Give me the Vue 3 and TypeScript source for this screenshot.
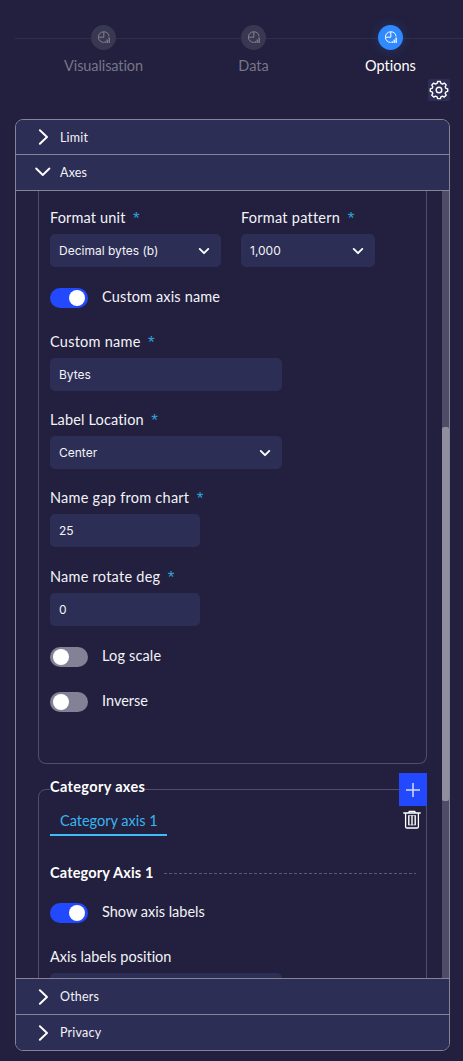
<script setup lang="ts">
import { ref } from 'vue'

interface Step { label: string; active: boolean; kind: string }

const steps: Step[] = [
  { label: 'Visualisation', active: false, kind: 'first' },
  { label: 'Data', active: false, kind: 'second' },
  { label: 'Options', active: true, kind: 'third' },
]

const customName = ref('Bytes')
const nameGap = ref('25')
const nameRotate = ref('0')
const customAxisName = ref(true)
const logScale = ref(false)
const inverse = ref(false)
const showLabels = ref(true)
</script>

<template>
  <div class="page">
    <header class="steps">
      <div v-for="s in steps" :key="s.label" class="step" :class="[s.kind, { active: s.active }]">
        <span class="dot">
          <svg viewBox="0 0 12 13" width="12" height="13" fill="none">
            <path d="M5.6 .8A5.3 5.3 0 1 0 5.7 11.4M5.6 .8A5.3 5.3 0 0 1 11 5.4M5.8 .8V6.2H.4" stroke="currentColor" stroke-width="1" />
            <path d="M7.2 12V10.3M9.2 12V8.6M11.2 12V6.4" stroke="currentColor" stroke-width="1.3" />
          </svg>
        </span>
        <span class="step-label">{{ s.label }}</span>
      </div>
    </header>

    <div class="tools">
      <button class="gear" aria-label="Settings">
        <svg viewBox="0 0 20 20" width="20" height="20" fill="none" stroke="#fff" stroke-width="1.4" stroke-linejoin="round">
          <path d="M8.600 1.500h2.800l.5 1.900 1.600.7 1.800-1 1.900 1.900-1 1.800.7 1.600 1.800.5v2.400l-1.800.5-.7 1.600 1 1.800-1.900 1.900-1.800-1-1.600.7-.5 1.800H8.600l-.5-1.800-1.600-.7-1.800 1-1.900-1.900 1-1.800-.7-1.600-1.800-.5V8.900l1.800-.5.7-1.600-1-1.800 1.900-1.900 1.800 1 1.600-.7z" />
          <circle cx="10" cy="10" r="2.8" />
        </svg>
      </button>
    </div>

    <main class="panel">
      <div class="bar limit">
        <svg class="chev" viewBox="0 0 16 16" width="16" height="16"><path d="M4.900 1.200 12 8 4.900 14.800" /></svg>
        <span>Limit</span>
      </div>
      <div class="bar axes">
        <svg class="chev" viewBox="0 0 16 16" width="16" height="16"><path d="M1.200 4.500 7.800 11 14.400 4.500" /></svg>
        <span>Axes</span>
      </div>

      <div class="content">
        <div class="scroll-area">
          <section class="group value-group">
            <div class="row">
              <div class="field w171">
                <label><span class="t-snug">Format unit</span><i>*</i></label>
                <div class="control">Decimal bytes (b)<svg class="caret" viewBox="0 0 12 8" width="12" height="8"><path d="M1.700 1.900 6 6.200l4.300-4.300" /></svg></div>
              </div>
              <div class="field w134">
                <label><span>Format pattern</span><i>*</i></label>
                <div class="control">1,000<svg class="caret" viewBox="0 0 12 8" width="12" height="8"><path d="M1.700 1.900 6 6.200l4.300-4.300" /></svg></div>
              </div>
            </div>
            <div class="toggle g21" @click="customAxisName = !customAxisName">
              <span class="switch" :class="{ on: customAxisName }"></span><span class="t-snug">Custom axis name</span>
            </div>
            <div class="field w232 g24">
              <label><span>Custom name</span><i>*</i></label>
              <input v-model="customName" class="control" type="text" />
            </div>
            <div class="field w232 g19">
              <label><span class="t-snug">Label Location</span><i>*</i></label>
              <div class="control">Center<svg class="caret" viewBox="0 0 12 8" width="12" height="8"><path d="M1.700 1.900 6 6.200l4.300-4.300" /></svg></div>
            </div>
            <div class="field w150 g19">
              <label><span>Name gap from chart</span><i>*</i></label>
              <input v-model="nameGap" class="control" type="text" />
            </div>
            <div class="field w150 g20">
              <label><span>Name rotate deg</span><i>*</i></label>
              <input v-model="nameRotate" class="control" type="text" />
            </div>
            <div class="toggle g21" @click="logScale = !logScale">
              <span class="switch" :class="{ on: logScale }"></span><span class="t-snug">Log scale</span>
            </div>
            <div class="toggle g25" @click="inverse = !inverse">
              <span class="switch" :class="{ on: inverse }"></span><span class="t-tight">Inverse</span>
            </div>
          </section>

          <section class="group category-group">
            <h3 class="legend">Category axes</h3>
            <div class="actions">
              <button class="add" aria-label="Add">
                <svg viewBox="0 0 14 14" width="14" height="14"><path d="M7 0v14M0 7h14" stroke="#fff" stroke-opacity=".8" stroke-width="1.5" /></svg>
              </button>
              <button class="remove" aria-label="Delete">
                <svg viewBox="0 0 18 19" width="18" height="19" fill="none" stroke="#fff" stroke-width="1.3">
                  <path d="M.3 3h17.400M5.700 2.800l.6-1.500h5.400l.6 1.500M2.600 3.200v13.500q0 1.300 1.300 1.300h10.200q1.300 0 1.300-1.300V3.200" />
                  <path d="M5.800 5.300v9.900M9 5.300v9.900M12.200 5.300v9.900" stroke-width="1.4" />
                  <path d="M5.800 5.600h6.400M5.800 14.900h6.400" stroke-width=".6" />
                </svg>
              </button>
            </div>
            <div class="tabs"><span class="tab">Category axis 1</span></div>
            <div class="subhead"><h4>Category Axis 1</h4><span class="dash"></span></div>
            <div class="toggle g20" @click="showLabels = !showLabels">
              <span class="switch" :class="{ on: showLabels }"></span><span class="t-tight">Show axis labels</span>
            </div>
            <div class="field w232 g24">
              <label><span class="t-tight">Axis labels position</span></label>
              <div class="control"></div>
            </div>
          </section>
        </div>
        <div class="track"><div class="thumb"></div></div>
      </div>

      <div class="bar others">
        <svg class="chev" viewBox="0 0 16 16" width="16" height="16"><path d="M4.900 1.200 12 8 4.900 14.800" /></svg>
        <span>Others</span>
      </div>
      <div class="bar privacy">
        <svg class="chev" viewBox="0 0 16 16" width="16" height="16"><path d="M4.900 1.200 12 8 4.900 14.800" /></svg>
        <span>Privacy</span>
      </div>
    </main>
  </div>
</template>

<style>
body { margin: 0; background: #22203e; }
</style>

<style scoped>
.page { width: 463px; height: 1061px; overflow: hidden; background: #22203e; color: #f3f3f8; font-family: Lato, sans-serif; font-size: 14.5px; letter-spacing: .25px; font-variant-ligatures: none; box-sizing: border-box; }
.page *, .page *::before { box-sizing: border-box; }
button { border: 0; padding: 0; cursor: pointer; display: flex; align-items: center; justify-content: center; }
.steps { display: grid; grid-template-columns: 177px 123px 151px; width: 451px; height: 79px; margin-left: 15px; padding-top: 25px; background: linear-gradient(#302e4b, #302e4b) 0 38px / 100% 1px no-repeat; }
.step { display: flex; flex-direction: column; align-items: center; color: #777589; letter-spacing: 0; }
.first { letter-spacing: -.1px; }
.dot { width: 25px; height: 25px; border-radius: 50%; background: #393852; display: flex; align-items: center; justify-content: center; color: #82818f; }
.step-label { line-height: 20px; margin-top: 6px; white-space: nowrap; }
.active { color: #fff; }
.active .dot { background: #308aff; color: #fff; box-shadow: 0 0 12px rgba(48, 138, 255, .22); }
.tools { height: 40px; display: flex; justify-content: flex-end; padding-right: 13px; }
.gear { width: 22px; height: 22px; border-radius: 2px; background: #2d2e55; }
.panel { width: 435px; height: 932px; margin-left: 15px; border: 1px solid #858396; border-radius: 8px; overflow: hidden; }
.bar { display: flex; align-items: center; height: 36px; padding-left: 19px; gap: 9px; background: #2d2e55; font-size: 12.5px; letter-spacing: .2px; }
.limit { height: 35px; border-bottom: 1px solid #858396; }
.axes { border-bottom: 1px solid #858396; padding-bottom: 1px; }
.others, .privacy { border-top: 1px solid #858396; }
.chev { fill: none; stroke: #fff; stroke-width: 1.900; stroke-linecap: round; stroke-linejoin: round; }
.content { display: flex; height: 787px; overflow: hidden; }
.scroll-area { flex: 1; padding: 0 15px 0 22px; overflow: hidden; }
.track { width: 7px; background: #4e4c66; padding-top: 236px; }
.thumb { height: 374px; border-radius: 2px; background: #918f9e; }
.group { border: 1px solid #4f4d68; padding: 0 11px; position: relative; }
.value-group { height: 573px; border-top: 0; border-radius: 0 0 8px 8px; padding-top: 17px; }
.category-group { height: 420px; margin-top: 25px; border-radius: 8px; padding: 16px 10px 0 11px; }
.row { display: flex; gap: 20px; }
.field label { display: flex; gap: 7.5px; height: 20px; line-height: 20px; margin-bottom: 6px; white-space: nowrap; }
.field i { font: 17px/22px "Liberation Sans", sans-serif; color: #2fa4d8; }
.control { display: flex; align-items: center; justify-content: space-between; width: 100%; height: 33px; padding: 0 11px 0 9px; border: 0; border-radius: 5px; outline: 0; background: #2d2e55; color: #f3f3f8; font: 12px Inter, sans-serif; letter-spacing: 0; }
.caret { fill: none; stroke: #fff; stroke-width: 1.900; stroke-linecap: round; stroke-linejoin: round; }
.w171 { width: 171px; }
.w134 { width: 134px; }
.w232 { width: 232px; }
.w150 { width: 150px; }
.g19 { margin-top: 19px; }
.g20 { margin-top: 20px; }
.g21 { margin-top: 21px; }
.g24 { margin-top: 24px; }
.g25 { margin-top: 25px; }
.t-snug { letter-spacing: .15px; }
.t-tight { letter-spacing: 0; }
.toggle { display: flex; gap: 14px; height: 20px; line-height: 18px; cursor: pointer; }
.switch { width: 38px; height: 20px; padding: 2px 3px; border-radius: 10px; background: #838196; display: flex; }
.switch::before { content: ''; width: 16px; height: 16px; border-radius: 50%; background: #fff; }
.switch.on { background: #2349ff; justify-content: flex-end; }
.legend { position: absolute; top: -13px; left: 11px; margin: 0; line-height: 20px; font-size: 14.5px; font-weight: 700; letter-spacing: .35px; color: #fff; background: #22203e; }
.actions { position: absolute; top: -17px; right: -1px; width: 28px; display: flex; flex-direction: column; align-items: center; }
.add { width: 28px; height: 33px; background: #2349ff; }
.remove { width: 26px; height: 22px; margin-top: 2px; padding-right: 2px; background: transparent; }
.tabs { display: flex; height: 30px; }
.tab { height: 30px; width: 117px; padding: 0 10px; line-height: 29px; letter-spacing: 0; color: #38b6ee; border-bottom: 2px solid #3cbcf8; white-space: nowrap; }
.subhead { display: flex; align-items: center; height: 20px; margin-top: 27px; }
.subhead h4 { margin: 0; width: 114px; font-size: 14.5px; line-height: 20px; letter-spacing: .16px; color: #fff; white-space: nowrap; }
.dash { flex: 1; height: 1px; margin-top: 1px; background: repeating-linear-gradient(90deg, #5c5a72 0 3px, transparent 3px 5px); }
</style>
